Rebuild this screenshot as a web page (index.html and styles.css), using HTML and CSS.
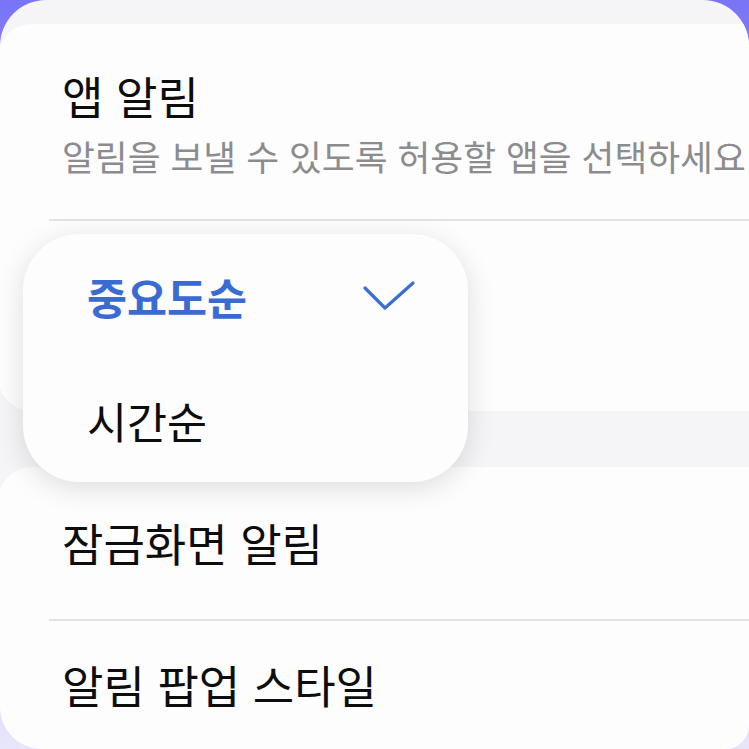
FILE: index.html
```html
<!DOCTYPE html>
<html lang="ko">

<head>
    <meta charset="UTF-8">
    <meta name="viewport" content="width=device-width, initial-scale=1.0">
    <title>알림</title>
    <link rel="stylesheet" href="styles.css">
</head>

<body>
    <div class="screen">
        <div class="settings">
            <section class="card card-top">
                <div class="row row-app">
                    <div class="row-title">앱 알림</div>
                    <div class="row-sub">알림을 보낼 수 있도록 허용할 앱을 선택하세요</div>
                </div>
                <div class="divider"></div>
                <div class="row row-sort"></div>
            </section>

            <section class="card card-bottom">
                <div class="row row-lock">
                    <div class="row-title">잠금화면 알림</div>
                </div>
                <div class="divider"></div>
                <div class="row row-popup">
                    <div class="row-title">알림 팝업 스타일</div>
                </div>
            </section>

            <!-- sort order dropdown -->
            <div class="sort-menu">
                <div class="sort-option selected">
                    <span>중요도순</span>
                    <svg class="check" width="54" height="34" viewBox="0 0 54 34">
                        <polyline points="3,8 23,28 51,3" fill="none" stroke="#3b6dd6" stroke-width="3.2"
                            stroke-linecap="round" stroke-linejoin="round" />
                    </svg>
                </div>
                <div class="sort-option">
                    <span>시간순</span>
                </div>
            </div>
        </div>
    </div>
</body>

</html>
```

FILE: styles.css
```css
body {
    margin: 0;
    height: 749px;
    overflow: hidden;
    background: linear-gradient(180deg, #7974f6 0%, #a8a4f8 45%, #e8e6fc 100%);
    font-family: "Noto Sans CJK KR", "Noto Sans", sans-serif;
}

.screen {
    height: 749px;
    background-color: #f5f5f7;
    border-radius: 46px 46px 24px 42px;
    overflow: hidden;
}

.settings {
    position: relative;
    padding-top: 24px;
}

.card {
    background-color: #fdfdfe;
    margin-left: -2px;
    margin-right: -40px;
    border-radius: 34px;
}

.card-bottom {
    margin-top: 56px;
    height: 360px;
}

.row {
    padding-left: 64px;
}

.row-title {
    font-size: 45px;
    line-height: 54px;
    color: #0d0d0d;
    white-space: nowrap;
}

.row-sub {
    margin-top: 12px;
    font-size: 35.7px;
    line-height: 42px;
    color: #8c8c8f;
    white-space: nowrap;
}

.row-app {
    padding-top: 45px;
    padding-bottom: 42px;
}

.row-sort {
    height: 190px;
}

.row-lock {
    height: 152px;
    display: flex;
    align-items: center;
}

.row-popup {
    padding-top: 37px;
}

.divider {
    height: 2px;
    margin-left: 51px;
    background-color: #e3e3e5;
}

.sort-menu {
    position: absolute;
    left: 23px;
    top: 234px;
    width: 445px;
    height: 248px;
    box-sizing: border-box;
    padding: 0 52px 0 64px;
    background-color: #fdfdfe;
    border-radius: 56px;
    box-shadow: 0 6px 28px rgba(0, 0, 0, 0.13);
}

.sort-option {
    display: flex;
    align-items: center;
    justify-content: space-between;
    height: 124px;
    font-size: 43.5px;
    color: #0d0d0d;
}

.sort-option.selected {
    color: #3a6bd3;
    font-weight: 700;
}

.check {
    margin-top: 2px;
}
```
